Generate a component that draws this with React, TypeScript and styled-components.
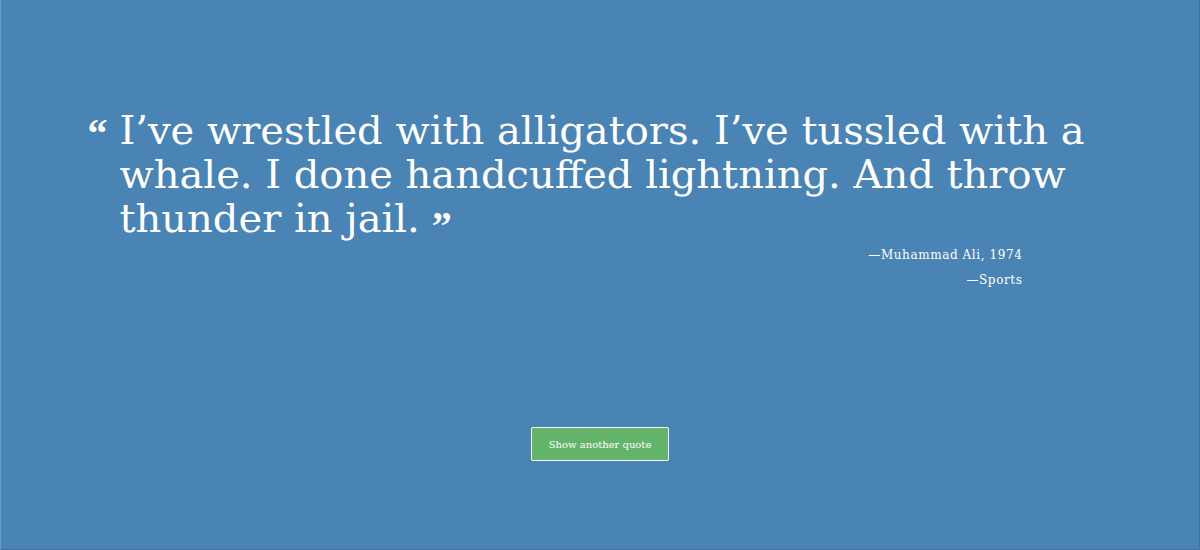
import React from "react";
import styled, { createGlobalStyle } from "styled-components";

const Global = createGlobalStyle`
  html, body { margin: 0; padding: 0; background: #4a84b4; }
  body { font-family: "DejaVu Serif", serif; color: #fff; }
`;

const Page = styled.div`
  box-sizing: border-box;
  height: 550px;
  border-left: 1px solid #6a9cc6;
  border-right: 1px solid #3f74a0;
  border-bottom: 1px solid #3f74a0;
  display: flex;
  flex-direction: column;
  align-items: center;
`;

const QuoteBox = styled.div`
  width: 935px;
  margin: 108px 0 0 -90px;
  display: flex;
  flex-direction: column;
`;

const QuoteRow = styled.div`
  display: flex;
  align-items: flex-start;
`;

const Mark = styled.span`
  font-family: "Liberation Serif", serif;
  font-weight: bold;
  font-size: 40px;
`;

const OpenMark = styled(Mark)`
  width: 32px;
  flex: none;
  line-height: 1;
  margin-top: 6px;
`;

const CloseMark = styled(Mark)`
  line-height: 0;
  vertical-align: -7px;
  margin-left: 12px;
`;

const QuoteText = styled.p`
  flex: none;
  margin: 0;
  font-size: 40px;
  line-height: 44px;
  width: 1000px;
`;

const Meta = styled.div`
  margin-top: 3px;
  text-align: right;
  font-size: 12px;
  letter-spacing: 0.6px;
  line-height: 25px;
`;

const Button = styled.button`
  margin: 134px 0 0 0;
  width: 138px;
  height: 34px;
  background: #63b36b;
  color: #fff;
  border: 1px solid #fff;
  border-radius: 2px;
  font-family: "DejaVu Serif", serif;
  font-size: 10px;
  cursor: pointer;
`;

export default function App() {
  return (
    <>
      <Global />
      <Page>
        <QuoteBox>
          <QuoteRow>
            <OpenMark>“</OpenMark>
            <QuoteText>
              <span>I’ve wrestled with alligators. I’ve tussled with a whale. I done handcuffed lightning. And throw thunder in jail.</span>
              <CloseMark>”</CloseMark>
            </QuoteText>
          </QuoteRow>
          <Meta>
            <div>—Muhammad Ali, 1974</div>
            <div>—Sports</div>
          </Meta>
        </QuoteBox>
        <Button>Show another quote</Button>
      </Page>
    </>
  );
}
